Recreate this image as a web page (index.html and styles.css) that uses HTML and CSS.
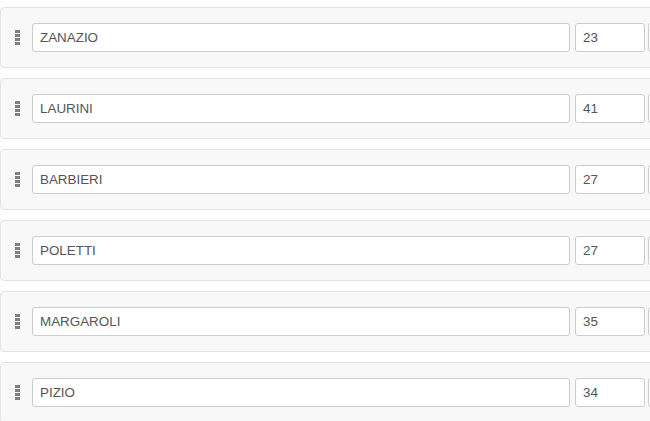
FILE: index.html
```html
<!DOCTYPE html>
<html lang="en">
<head>
  <meta charset="UTF-8">
  <meta name="viewport" content="width=device-width, initial-scale=1.0">
  <title>Roster</title>
  <link rel="stylesheet" href="styles.css">
</head>
<body>
  <div class="list">
    <div class="row">
      <span class="handle"><i></i><i></i><i></i><i></i></span>
      <input class="field name" type="text" value="ZANAZIO">
      <input class="field num" type="text" value="23">
      <input class="field extra" type="text" value="">
    </div>
    <div class="row">
      <span class="handle"><i></i><i></i><i></i><i></i></span>
      <input class="field name" type="text" value="LAURINI">
      <input class="field num" type="text" value="41">
      <input class="field extra" type="text" value="">
    </div>
    <div class="row">
      <span class="handle"><i></i><i></i><i></i><i></i></span>
      <input class="field name" type="text" value="BARBIERI">
      <input class="field num" type="text" value="27">
      <input class="field extra" type="text" value="">
    </div>
    <div class="row">
      <span class="handle"><i></i><i></i><i></i><i></i></span>
      <input class="field name" type="text" value="POLETTI">
      <input class="field num" type="text" value="27">
      <input class="field extra" type="text" value="">
    </div>
    <div class="row">
      <span class="handle"><i></i><i></i><i></i><i></i></span>
      <input class="field name" type="text" value="MARGAROLI">
      <input class="field num" type="text" value="35">
      <input class="field extra" type="text" value="">
    </div>
    <div class="row">
      <span class="handle"><i></i><i></i><i></i><i></i></span>
      <input class="field name" type="text" value="PIZIO">
      <input class="field num" type="text" value="34">
      <input class="field extra" type="text" value="">
    </div>
  </div>
</body>
</html>
```

FILE: styles.css
```css
body {
  font-family: 'Liberation Sans', Arial, sans-serif;
  margin: 0;
  padding: 7px 0 0 0;
  color: #555;
  background-color: #fff;
  overflow: hidden;
}
.list {
  width: 800px;
}
.row {
  display: flex;
  align-items: center;
  height: 59px;
  padding: 0 0 0 14px;
  margin-bottom: 10px;
  background-color: #f8f8f8;
  border: 1px solid #e3e3e3;
  border-radius: 4px;
}
.handle {
  display: flex;
  flex-direction: column;
  gap: 1px;
  width: 5px;
  margin-right: 12px;
}
.handle i {
  display: block;
  width: 5px;
  height: 3px;
  background-color: #808080;
}
.field {
  box-sizing: border-box;
  height: 29px;
  padding: 0 7px;
  border: 1px solid #ccc;
  border-radius: 3px;
  background-color: #fff;
  font-family: 'Liberation Sans', Arial, sans-serif;
  font-size: 13.4px;
  color: #555;
  margin: 0;
}
.name {
  width: 538px;
}
.num {
  width: 70px;
  margin-left: 5px;
}
.extra {
  width: 70px;
  margin-left: 3px;
}
```
